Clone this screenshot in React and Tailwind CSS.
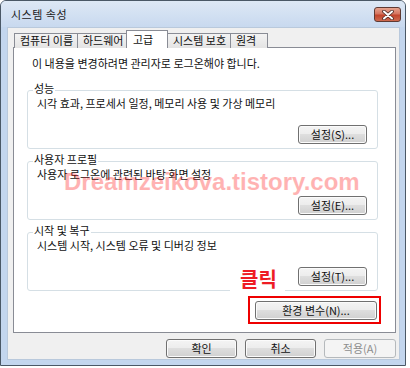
import React from 'react';

const font = { fontFamily: '"Noto Sans CJK KR", "Noto Sans", sans-serif' };

// win7 style push button
function Btn({ children, className = '', disabled = false }) {
  return (
    <div
      className={`h-[19px] rounded-[3px] border flex items-center justify-center text-[11px] leading-none ${
        disabled
          ? 'border-[#b5b9bc] bg-[#f4f4f4] text-[#8d8d8d]'
          : 'border-[#707070] text-[#111] bg-[linear-gradient(to_bottom,#f4f4f4_0%,#ececec_50%,#dedede_50%,#d0d0d0_100%)] shadow-[inset_0_0_0_1px_#fbfbfb]'
      } ${className}`}
    >
      {children}
    </div>
  );
}

function GroupBox({ label, text, button, className = '' }) {
  return (
    <div className={`relative w-[351px] h-[59px] border border-[#d5dfe5] rounded-[3px] flex flex-col ${className}`}>
      <span className="absolute -top-[9px] left-[5px] bg-white px-[1px] text-[11px] leading-[13px] text-[#111]">{label}</span>
      <p className="pl-[9px] pt-[5px] text-[11px] leading-[14px] text-[#111]">{text}</p>
      <div className="mt-auto mb-[4px] mr-[10px] flex justify-end">
        <Btn className="w-[69px]">{button}</Btn>
      </div>
    </div>
  );
}

export default function App() {
  const tabs = [
    { name: '컴퓨터 이름', w: 'w-[64px]' },
    { name: '하드웨어', w: 'w-[50px]' },
    { name: '고급', w: 'w-[42px]', active: true },
    { name: '시스템 보호', w: 'w-[64px]' },
    { name: '원격', w: 'w-[38px]' },
  ];

  return (
    <div className="w-[410px] h-[368px] bg-white" style={font}>
      <div className="w-[406px] h-[366px] border border-[#4a5866] rounded-t-[6px] bg-[#c3d6ee] flex flex-col">
        {/* title bar */}
        <div className="h-[26px] flex items-center justify-between pl-[10px] pr-[4px] rounded-t-[5px] bg-[linear-gradient(to_bottom,#dde8f5,#c8d9ef)]">
          <span className="text-[11px] text-[#1a1a1a] tracking-[0.5px]">시스템 속성</span>
          <div className="w-[27px] h-[15px] mt-[1px] rounded-[3px] border border-[#5e3a33] bg-[linear-gradient(to_bottom,#e6a48f_0%,#d57560_45%,#c2452c_55%,#cd6a4f_100%)] flex items-center justify-center">
            <svg width="12" height="10" viewBox="0 0 12 10">
              <path d="M2 1.5 L10 8.5 M10 1.5 L2 8.5" stroke="#4a2a24" strokeWidth="3.6" strokeLinecap="round" />
              <path d="M2 1.5 L10 8.5 M10 1.5 L2 8.5" stroke="#ffffff" strokeWidth="2" strokeLinecap="round" />
            </svg>
          </div>
        </div>

        {/* dialog body */}
        <div className="ml-[6px] mr-[5px] mb-[5px] flex-1 bg-[#f0f0f0] border border-[#b9c9dc] pl-[5px] pr-[2px] pt-[2px] flex flex-col">
          {/* tabs */}
          <div className="relative z-10 flex items-end h-[18px] -mb-px pl-[1px]">
            {tabs.map((t) =>
              t.active ? (
                <div
                  key={t.name}
                  className={`${t.w} h-[18px] -ml-px border border-b-0 border-[#898c95] bg-white text-[11px] leading-[14px] pl-[6px] pt-[1px] text-[#111]`}
                >
                  {t.name}
                </div>
              ) : (
                <div
                  key={t.name}
                  className={`${t.w} h-[15px] -ml-px first:ml-0 border border-b-0 border-[#898c95] bg-[linear-gradient(to_bottom,#f3f3f3,#e4e4e4)] text-[11px] leading-[13px] pl-[5px] text-[#111]`}
                >
                  {t.name}
                </div>
              )
            )}
          </div>

          {/* tab panel */}
          <div className="relative w-[383px] h-[286px] border border-[#898c95] bg-white pl-[13px] flex flex-col">
            <p className="pt-[8px] pl-[5px] text-[11px] leading-[14px] text-[#111]">이 내용을 변경하려면 관리자로 로그온해야 합니다.</p>

            <GroupBox className="mt-[20px]" label="성능" text="시각 효과, 프로세서 일정, 메모리 사용 및 가상 메모리" button="설정(S)..." />
            <GroupBox className="mt-[12px]" label="사용자 프로필" text="사용자 로그온에 관련된 바탕 화면 설정" button="설정(E)..." />
            <GroupBox className="mt-[12px]" label="시작 및 복구" text="시스템 시작, 시스템 오류 및 디버깅 정보" button="설정(T)..." />

            <div className="w-[351px] mt-[10px] flex justify-end pr-[1px]">
              <div className="relative">
                <Btn className="w-[122px]">환경 변수(N)...</Btn>
                <div className="absolute -left-[7px] -right-[4px] -top-[5px] -bottom-[4px] border-2 border-[#ee0000]" />
              </div>
            </div>

            {/* annotations */}
            <span className="absolute left-[216px] top-[209px] bg-white pl-[10px] pr-[8px] pt-[9px] pb-[3px] text-[20px] leading-[26px] font-bold text-[#ee1c24]">클릭</span>
            <span
              className="absolute left-[50px] top-[116px] text-[24px] font-bold text-[#ff0000]/30 whitespace-nowrap"
              style={{ fontFamily: '"Liberation Sans", Arial, sans-serif' }}
            >
              Dreamzeikova.tistory.com
            </span>
          </div>

          {/* bottom buttons */}
          <div className="mt-[6px] flex justify-end gap-[8px] pr-[1px]">
            <Btn className="w-[71px]">확인</Btn>
            <Btn className="w-[71px]">취소</Btn>
            <Btn className="w-[72px]" disabled>적용(A)</Btn>
          </div>
        </div>
      </div>
    </div>
  );
}
